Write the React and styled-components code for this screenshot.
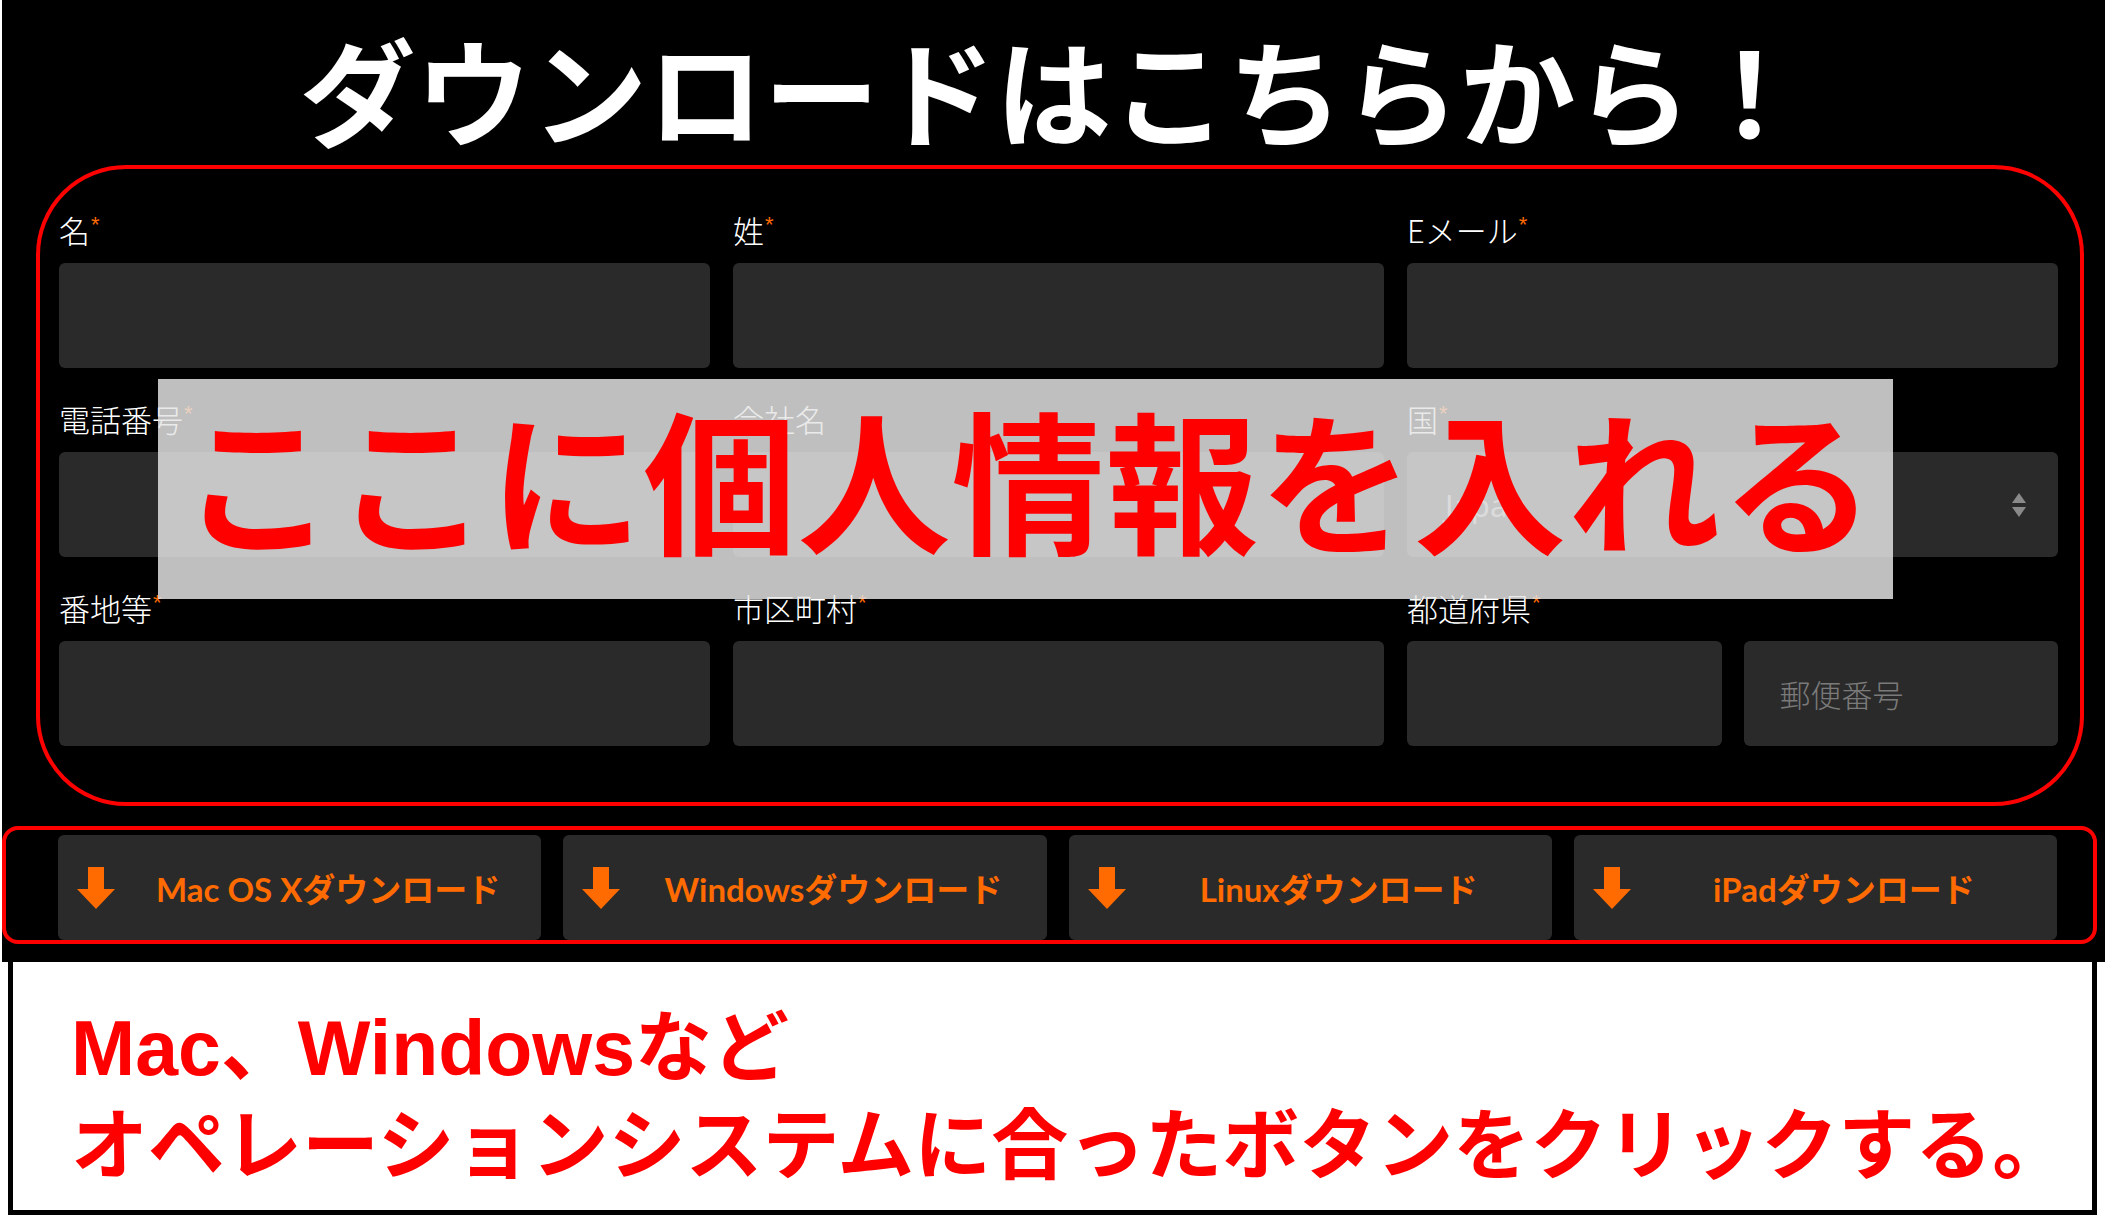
import React from "react";
import styled, { createGlobalStyle } from "styled-components";

const Global = createGlobalStyle`
  html, body {
    margin: 0;
    padding: 0;
    background: #ffffff;
  }
  body {
    width: 2105px;
    height: 1218px;
    overflow: hidden;
    font-family: "Noto Sans CJK JP", "Noto Sans", sans-serif;
  }
  * { box-sizing: border-box; }
`;

const Page = styled.div`
  width: 2105px;
  height: 1218px;
  display: flex;
  flex-direction: column;
`;

const Panel = styled.section`
  background: #000;
  margin-left: 2px;
  height: 962px;
  flex-shrink: 0;
  display: flex;
  flex-direction: column;
`;

const Title = styled.h1`
  margin: 0;
  height: 165px;
  padding-top: 14px;
  text-align: center;
  color: #fff;
  font-family: "Noto Sans CJK JP", sans-serif;
  font-weight: 700;
  font-size: 116px;
  line-height: 147px;
  letter-spacing: 0;
  white-space: nowrap;
`;

const FormFrame = styled.div`
  position: relative;
  margin: 0 21px 0 34px;
  border: 4px solid #ff0000;
  border-radius: 90px;
  padding: 43px 22px 56px 19px;
  display: grid;
  grid-template-columns: repeat(3, 1fr);
  column-gap: 23px;
  row-gap: 33px;
`;

const Field = styled.div`
  display: flex;
  flex-direction: column;
  min-width: 0;
`;

const Label = styled.label`
  height: 36px;
  margin-bottom: 15px;
  color: #fff;
  font-family: "Noto Sans CJK JP", sans-serif;
  font-weight: 300;
  font-size: 31px;
  line-height: 36px;
  white-space: nowrap;
`;

const Req = styled.span`
  color: #ff6a00;
  font-family: "Liberation Sans", "DejaVu Sans", sans-serif;
  font-weight: 400;
  font-size: 22px;
  line-height: 26px;
  vertical-align: top;
  margin-left: 1px;
`;

const Input = styled.input`
  display: block;
  width: 100%;
  height: 105px;
  border: none;
  outline: none;
  border-radius: 6px;
  background: #2a2a2a;
  padding: 0 36px;
  color: #ddd;
  font-family: "Noto Sans CJK JP", sans-serif;
  font-weight: 300;
  font-size: 31px;
  &::placeholder {
    color: #7a7a7a;
  }
`;

const InputPair = styled.div`
  display: grid;
  grid-template-columns: 1fr 1fr;
  column-gap: 22px;
`;

const SelectBox = styled.div`
  height: 105px;
  border-radius: 6px;
  background: #2a2a2a;
  padding: 0 32px 0 38px;
  display: flex;
  align-items: center;
  justify-content: space-between;
  color: #a8a8a8;
  font-family: "Noto Sans", "Noto Sans CJK JP", sans-serif;
  font-size: 31px;
`;

const Overlay = styled.div`
  position: absolute;
  left: 118px;
  top: 210px;
  width: 1735px;
  height: 220px;
  background: rgba(230, 230, 230, 0.83);
  display: flex;
  align-items: center;
  justify-content: center;
  color: #ff0000;
  font-family: "Noto Sans CJK JP", sans-serif;
  font-weight: 700;
  font-size: 153px;
  letter-spacing: 1px;
  white-space: nowrap;
  padding: 0 0 26px 6px;
`;

const ButtonFrame = styled.div`
  margin: 20px 8px 0 0;
  border: 4px solid #ff0000;
  border-radius: 16px;
  padding: 5px 36px 0 52px;
  display: grid;
  grid-template-columns: repeat(4, 1fr);
  column-gap: 22px;
`;

const DownloadButton = styled.button`
  height: 105px;
  border: none;
  border-radius: 6px;
  background: #2a2a2a;
  padding: 0 0 0 19px;
  display: flex;
  align-items: center;
  cursor: pointer;
  color: #ff6b00;
  font-family: "Lato", "Noto Sans CJK JP", sans-serif;
  font-weight: 700;
  font-size: 33px;
`;

const ButtonText = styled.span`
  flex: 1;
  text-align: center;
  white-space: nowrap;
`;

const NoteBox = styled.div`
  margin: 0 8px;
  height: 253px;
  flex-shrink: 0;
  background: #fff;
  border: 5px solid #000;
  border-top: none;
  padding: 37px 0 0 58px;
`;

const NoteText = styled.p`
  margin: 0;
  color: #ff0000;
  font-family: "Liberation Sans", "Noto Sans CJK JP", sans-serif;
  font-weight: 700;
  font-size: 77px;
  line-height: 98px;
  white-space: nowrap;
`;

const ArrowDown = () => (
  <svg width="38" height="42" viewBox="0 0 38 42" aria-hidden="true">
    <path d="M11 0 H27 V22 H38 L19 42 L0 22 H11 Z" fill="#ff6b00" />
  </svg>
);

const UpDown = () => (
  <svg width="14" height="24" viewBox="0 0 14 24" aria-hidden="true">
    <path d="M7 0 L14 10 H0 Z" fill="#8a8a8a" />
    <path d="M0 14 H14 L7 24 Z" fill="#8a8a8a" />
  </svg>
);

const TextField = ({ label, required }) => (
  <Field>
    <Label>
      {label}
      {required && <Req>*</Req>}
    </Label>
    <Input type="text" />
  </Field>
);

const buttons = [
  "Mac OS Xダウンロード",
  "Windowsダウンロード",
  "Linuxダウンロード",
  "iPadダウンロード",
];

export default function App() {
  return (
    <Page>
      <Global />
      <Panel>
        <Title>ダウンロードはこちらから！</Title>
        <FormFrame>
          <TextField label="名" required />
          <TextField label="姓" required />
          <TextField label="Eメール" required />
          <TextField label="電話番号" required />
          <TextField label="会社名" />
          <Field>
            <Label>
              国<Req>*</Req>
            </Label>
            <SelectBox>
              <span>Japan</span>
              <UpDown />
            </SelectBox>
          </Field>
          <TextField label="番地等" required />
          <TextField label="市区町村" required />
          <Field>
            <Label>
              都道府県<Req>*</Req>
            </Label>
            <InputPair>
              <Input type="text" />
              <Input type="text" placeholder="郵便番号" />
            </InputPair>
          </Field>
          <Overlay>ここに個人情報を入れる</Overlay>
        </FormFrame>
        <ButtonFrame>
          {buttons.map((b) => (
            <DownloadButton key={b}>
              <ArrowDown />
              <ButtonText>{b}</ButtonText>
            </DownloadButton>
          ))}
        </ButtonFrame>
      </Panel>
      <NoteBox>
        <NoteText>
          Mac、Windowsなど
          <br />
          オペレーションシステムに合ったボタンをクリックする。
        </NoteText>
      </NoteBox>
    </Page>
  );
}
